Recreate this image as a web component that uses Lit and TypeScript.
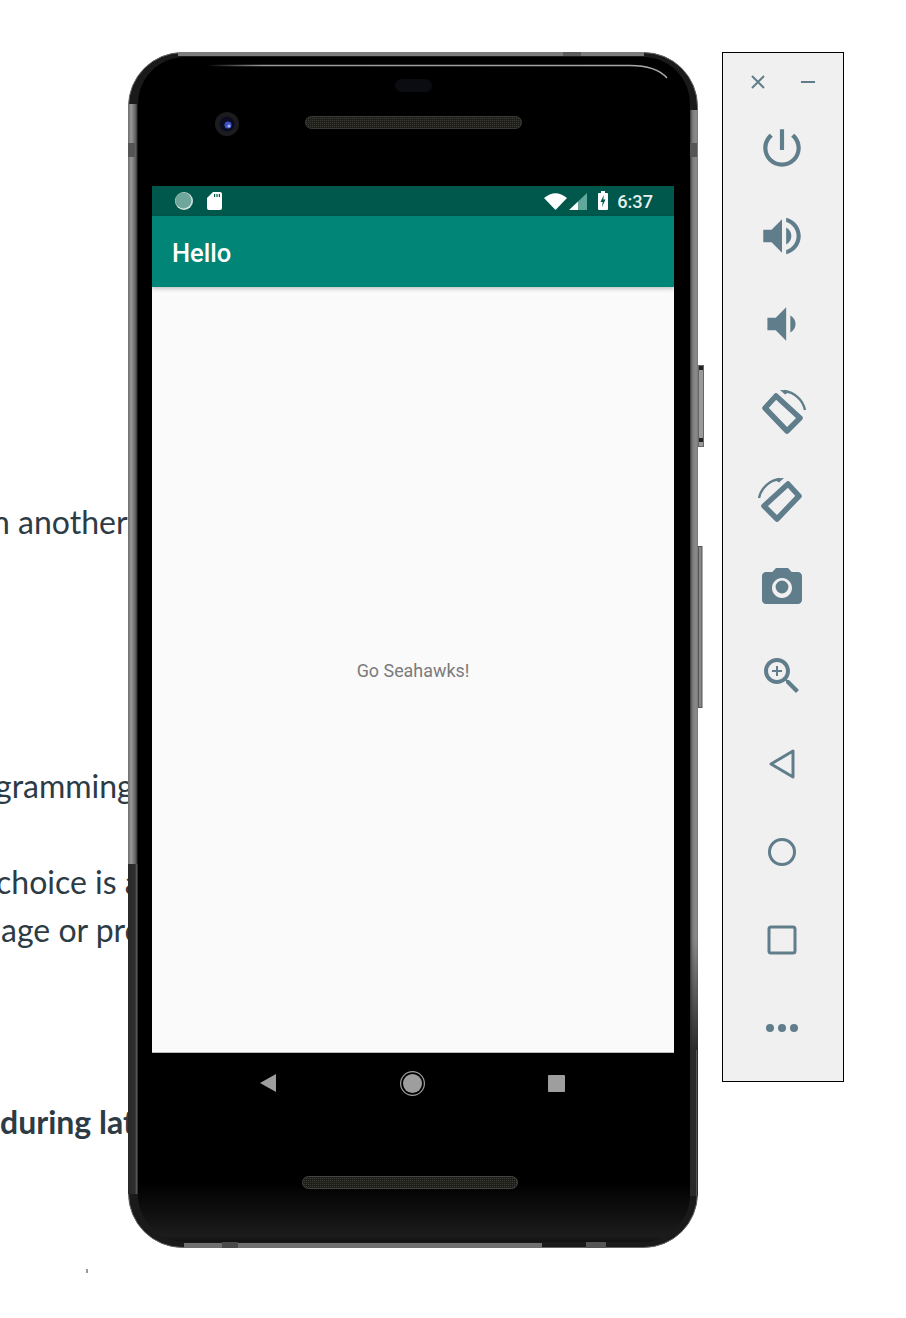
import { LitElement, css, html, svg } from 'lit';
import { customElement } from 'lit/decorators.js';

const docLines = [
  { text: 'n another', cls: 'first' },
  { text: 'gramming', cls: 'second' },
  { text: 'choice is a', cls: 'third' },
  { text: 'age or pro', cls: 'fourth' },
  { text: 'during lat', cls: 'fifth' },
];

// emulator side bar, top to bottom
const rotateArrow = svg`
  <polygon points="31,9 42,21 20,44 7,31" fill="none" stroke="currentColor" stroke-width="5.5" stroke-linejoin="round" />
  <path d="M2 23 A24 24 0 0 1 23 4" fill="none" stroke="currentColor" stroke-width="2.4" />
  <path d="M17 4.5 Q22 2.5 27 3 L22 7.5 Z" fill="currentColor" />`;

const tools = [
  { size: 50, box: '0 0 24 24', body: svg`<path d="M13 3h-2v10h2V3zm4.83 2.17l-1.42 1.42C17.99 7.86 19 9.81 19 12c0 3.87-3.13 7-7 7s-7-3.13-7-7c0-2.19 1.01-4.14 2.58-5.42L6.17 5.17C4.23 6.82 3 9.26 3 12c0 4.97 4.03 9 9 9s9-4.03 9-9c0-2.74-1.23-5.18-3.17-6.83z" />` },
  { size: 50, box: '0 0 24 24', body: svg`<path d="M3 9v6h4l5 5V4L7 9H3zm13.5 3c0-1.77-1.02-3.29-2.5-4.03v8.05c1.48-.73 2.5-2.25 2.5-4.02zM14 3.23v2.06c2.89.86 5 3.54 5 6.71s-2.11 5.85-5 6.71v2.06c4.01-.91 7-4.49 7-8.77s-2.99-7.86-7-8.77z" />` },
  { size: 50, box: '0 0 24 24', body: svg`<path d="M18.5 12c0-1.77-1.02-3.29-2.5-4.03v8.05c1.48-.73 2.5-2.25 2.5-4.02zM5 9v6h4l5 5V4L9 9H5z" />` },
  { size: 50, box: '0 0 50 50', body: svg`<g transform="translate(50,0) scale(-1,1)">${rotateArrow}</g>` },
  { size: 50, box: '0 0 50 50', body: rotateArrow },
  { size: 48, box: '0 0 24 24', body: svg`<circle cx="12" cy="11.5" r="3.2" /><path d="M9 2L7.17 4H4c-1.1 0-2 .9-2 2v12c0 1.1.9 2 2 2h16c1.1 0 2-.9 2-2V6c0-1.1-.9-2-2-2h-3.17L15 2H9zm3 15c-2.76 0-5-2.24-5-5s2.24-5 5-5 5 2.24 5 5-2.24 5-5 5z" />` },
  { size: 48, box: '0 0 24 24', body: svg`<path d="M15.5 14h-.79l-.28-.27C15.41 12.59 16 11.11 16 9.5 16 5.91 13.09 3 9.5 3S3 5.91 3 9.5 5.91 16 9.5 16c1.61 0 3.09-.59 4.23-1.57l.27.28v.79l5 4.99L20.49 19l-4.99-5zm-6 0C7.01 14 5 11.99 5 9.5S7.01 5 9.5 5 14 7.01 14 9.5 11.99 14 9.5 14z" /><path d="M12 10h-2v2H9v-2H7V9h2V7h1v2h2v1z" />` },
  { size: 48, box: '0 0 48 48', body: svg`<polygon points="13,24 35,11 35,37" fill="none" stroke="currentColor" stroke-width="3" stroke-linejoin="round" />` },
  { size: 48, box: '0 0 48 48', body: svg`<circle cx="24" cy="24" r="12.5" fill="none" stroke="currentColor" stroke-width="3" />` },
  { size: 48, box: '0 0 48 48', body: svg`<rect x="11" y="11" width="26" height="26" rx="2" fill="none" stroke="currentColor" stroke-width="3" />` },
  { size: 48, box: '0 0 48 48', body: svg`<circle cx="12" cy="24" r="4" /><circle cx="24" cy="24" r="4" /><circle cx="36" cy="24" r="4" />` },
];

@customElement('app-root')
export class AppRoot extends LitElement {
  static styles = css`
    :host {
      display: block;
    }

    .page {
      display: flex;
      align-items: flex-start;
      width: 906px;
      height: 1318px;
      overflow: hidden;
      background: #fff;
    }

    /* Page text that sits behind the emulator */
    .docs {
      flex: none;
      width: 128px;
      height: 1318px;
      padding-top: 498px;
      box-sizing: border-box;
      overflow: hidden;
      font-family: Lato, sans-serif;
      font-size: 32px;
      line-height: 48px;
      color: #2d3b45;
      white-space: nowrap;
    }

    .first { margin-left: -8px; }
    .second { margin-left: -5px; margin-top: 216px; }
    .third { margin-left: -4px; margin-top: 48px; }
    .fourth { margin-left: 1px; }
    .fifth { margin-left: 0; margin-top: 144px; font-weight: 700; }

    .tick {
      width: 2px;
      height: 4px;
      margin: 123px 0 0 86px;
      background: #999;
    }

    /* Device */
    .phone {
      position: relative;
      flex: none;
      box-sizing: border-box;
      width: 576px;
      height: 1196px;
      margin-top: 52px;
      padding: 134px 30px 0 24px;
    }

    .bezel {
      position: absolute;
      inset: 0;
      width: 576px;
      height: 1196px;
    }

    .screen {
      position: relative;
      display: flex;
      flex-direction: column;
      height: 867px;
      background: #fafafa;
      font-family: Roboto, sans-serif;
    }

    .status {
      display: flex;
      align-items: center;
      flex: none;
      height: 30px;
      padding: 0 21px 0 23px;
      background: #00574b;
      color: #fff;
    }

    .status svg {
      display: block;
      fill: #fff;
    }

    .status-left {
      display: flex;
      align-items: center;
      gap: 14px;
      margin-top: -1px;
    }

    .status-right {
      display: flex;
      align-items: center;
      margin-left: auto;
      margin-top: 1px;
    }

    .wifi { margin-right: 2px; }
    .signal { margin-right: 11px; }
    .battery { margin-right: 9px; margin-top: -2px; }

    .time {
      font-size: 18.2px;
      font-weight: 500;
      line-height: 22px;
      color: #e6f0ee;
    }

    .toolbar {
      position: relative;
      display: flex;
      align-items: center;
      flex: none;
      box-sizing: border-box;
      height: 71px;
      padding: 2px 0 0 20px;
      background: #008577;
      box-shadow: 0 2px 4px rgba(0, 0, 0, 0.22);
      font-size: 25.5px;
      font-weight: 500;
      color: #fff;
    }

    .content {
      display: flex;
      flex: 1;
      align-items: center;
      justify-content: center;
      padding-top: 1px;
      border-bottom: 1px solid #bbb;
      font-size: 17.9px;
      color: #7b7b7b;
    }

    .nav {
      position: relative;
      display: flex;
      height: 60px;
      padding-left: 44px;
    }

    .nav-cell {
      display: flex;
      align-items: center;
      justify-content: center;
      width: 144px;
    }

    .nav svg {
      display: block;
      fill: #9e9e9e;
    }

    /* Emulator tool bar */
    .tools {
      flex: none;
      box-sizing: border-box;
      width: 122px;
      height: 1030px;
      margin: 52px 0 0 18px;
      padding-bottom: 9px;
      border: 1px solid #000;
      background: #f0f0f0;
      color: #607d8b;
    }

    .window-row {
      display: flex;
      justify-content: center;
      height: 58px;
    }

    .window-btn {
      display: flex;
      align-items: center;
      justify-content: center;
      width: 50px;
      height: 58px;
    }

    .tool {
      display: flex;
      align-items: center;
      justify-content: center;
      height: 88px;
    }

    .tool svg {
      display: block;
      fill: currentColor;
    }

    .tool-list {
      margin-top: -7px;
      padding-right: 2px;
    }
  `;

  renderBezel() {
    return html`
      <svg class="bezel" viewBox="128 52 576 1196">
        <defs>
          <linearGradient id="rail" x1="0" x2="1" y1="0" y2="0">
            <stop offset="0" stop-color="#6c6c6c" />
            <stop offset="0.35" stop-color="#999" />
            <stop offset="0.8" stop-color="#666" />
            <stop offset="1" stop-color="#3a3a3a" />
          </linearGradient>
          <linearGradient id="railRight" x1="0" x2="1" y1="0" y2="0">
            <stop offset="0" stop-color="#3a3a3a" />
            <stop offset="0.3" stop-color="#777" />
            <stop offset="0.75" stop-color="#8c8c8c" />
            <stop offset="1" stop-color="#777" />
          </linearGradient>
          <linearGradient id="railLow" x1="0" x2="1" y1="0" y2="0">
            <stop offset="0" stop-color="#2a2a2a" />
            <stop offset="0.7" stop-color="#2e2e2e" />
            <stop offset="0.85" stop-color="#555" />
            <stop offset="1" stop-color="#222" />
          </linearGradient>
          <linearGradient id="railFade" x1="0" x2="0" y1="0" y2="1">
            <stop offset="0" stop-color="#2a2a2a" stop-opacity="0" />
            <stop offset="1" stop-color="#2a2a2a" />
          </linearGradient>
          <linearGradient id="body" x1="0" x2="0" y1="0" y2="1">
            <stop offset="0" stop-color="#000" />
            <stop offset="0.95" stop-color="#000" />
            <stop offset="0.995" stop-color="#1c1c1c" />
            <stop offset="1" stop-color="#111" />
          </linearGradient>
          <linearGradient id="glint" x1="0" x2="1" y1="0" y2="0">
            <stop offset="0" stop-color="#aaa" stop-opacity="0" />
            <stop offset="0.12" stop-color="#999" />
            <stop offset="1" stop-color="#aaa" />
          </linearGradient>
          <pattern id="mesh" width="2" height="2" patternUnits="userSpaceOnUse">
            <rect width="2" height="2" fill="#1e1e1b" />
            <rect width="1" height="1" fill="#3c3c35" />
          </pattern>
        </defs>

        <!-- side keys -->
        <rect x="698.5" y="365.5" width="5" height="81" fill="#9a9a9a" stroke="#666" />
        <rect x="698.5" y="546.5" width="3.5" height="161" fill="#888" stroke="#555" />
        <rect x="699" y="366" width="4" height="4" fill="#222" />
        <rect x="699" y="438" width="4" height="4" fill="#222" />

        <!-- shell -->
        <rect x="128.5" y="52.500" width="569" height="1195" rx="54" fill="#1a1a1a" stroke="#666" />
        <rect x="128" y="104" width="9" height="760" fill="url(#rail)" />
        <rect x="128" y="864" width="10" height="330" fill="url(#railLow)" />
        <rect x="128" y="143" width="7" height="14" fill="#555" />
        <rect x="690" y="110" width="8" height="1086" fill="url(#railRight)" />
        <rect x="690" y="940" width="8" height="110" fill="url(#railFade)" />
        <rect x="690" y="1050" width="8" height="146" fill="#2a2a2a" />
        <rect x="696" y="1050" width="1" height="146" fill="#555" />
        <rect x="690" y="143" width="7" height="14" fill="#555" />
        <rect x="178" y="52" width="466" height="4" fill="#7d7d7d" />
        <rect x="563" y="52" width="18" height="4" fill="#5c5c5c" />
        <rect x="184" y="1243" width="358" height="5" fill="#707070" />
        <rect x="222" y="1241" width="16" height="7" fill="#4a4a4a" />
        <rect x="586" y="1241" width="20" height="7" fill="#555" />

        <!-- front glass -->
        <rect x="138" y="57" width="552" height="1185" rx="47" fill="url(#body)" />
        <path d="M207 65.5 H630 Q656 65.5 667 78" fill="none" stroke="url(#glint)" stroke-width="1.5" />

        <!-- sensors and speakers -->
        <rect x="395" y="79" width="37" height="13" rx="6.5" fill="#0a0c12" />
        <circle cx="227" cy="124" r="12" fill="#1c1c1e" />
        <circle cx="227" cy="124" r="7.5" fill="#0b0c22" />
        <circle cx="228" cy="125" r="3.5" fill="#3c52c4" />
        <circle cx="229" cy="126" r="1.5" fill="#a8b4ee" />
        <rect x="305.5" y="116.5" width="216" height="12" rx="6" fill="url(#mesh)" stroke="#3a3a3a" />
        <rect x="302.5" y="1176.5" width="215" height="12" rx="6" fill="url(#mesh)" stroke="#444" />
      </svg>
    `;
  }

  renderStatus() {
    return html`
      <div class="status">
        <div class="status-left">
          <svg width="18" height="18" viewBox="0 0 18 18">
            <circle cx="9" cy="9" r="9" fill="#cfe0dc" />
            <circle cx="8.4" cy="8.4" r="8" fill="#6fa69c" />
          </svg>
          <svg width="15" height="18" viewBox="0 0 15 18">
            <path d="M6 0H13A2 2 0 0 1 15 2V16A2 2 0 0 1 13 18H2A2 2 0 0 1 0 16V6Z" />
            <path d="M7 2h1.2v3H7zM9.4 2h1.2v3H9.4zM11.8 2H13v3h-1.2z" fill="#00574b" />
          </svg>
        </div>
        <div class="status-right">
          <svg class="wifi" width="23" height="17" viewBox="0 0 23 17">
            <path d="M0 5 Q11.5 -4.5 23 5 L11.5 17 Z" />
          </svg>
          <svg class="signal" width="18" height="17" viewBox="0 0 18 17">
            <path d="M18 0V17H9V8.5Z" fill="#62a79c" />
            <path d="M9 8.5V17H0Z" />
          </svg>
          <svg class="battery" width="10" height="19" viewBox="0 0 10 19">
            <path d="M3 0H7V2H9A1 1 0 0 1 10 3V18A1 1 0 0 1 9 19H1A1 1 0 0 1 0 18V3A1 1 0 0 1 1 2H3Z" />
            <path d="M5.8 4 L2.5 11 H4.7 L4 16 L7.5 8.5 H5.3 Z" fill="#00574b" />
          </svg>
          <span class="time">6:37</span>
        </div>
      </div>
    `;
  }

  renderNav() {
    return html`
      <div class="nav">
        <div class="nav-cell">
          <svg width="16" height="18" viewBox="0 0 16 18"><path d="M0 9 L16 0 V18 Z" /></svg>
        </div>
        <div class="nav-cell">
          <svg width="25" height="25" viewBox="0 0 25 25">
            <circle cx="12.5" cy="12.5" r="11.9" fill="none" stroke="#9e9e9e" stroke-width="1.2" />
            <circle cx="12.5" cy="12.5" r="9.5" />
          </svg>
        </div>
        <div class="nav-cell">
          <svg width="17" height="17" viewBox="0 0 17 17"><rect width="17" height="17" rx="1" /></svg>
        </div>
      </div>
    `;
  }

  render() {
    return html`
      <div class="page">
        <div class="docs">
          ${docLines.map(line => html`<div class=${line.cls}>${line.text}</div>`)}
          <div class="tick"></div>
        </div>

        <div class="phone">
          ${this.renderBezel()}
          <div class="screen">
            ${this.renderStatus()}
            <div class="toolbar">Hello</div>
            <div class="content">Go Seahawks!</div>
          </div>
          ${this.renderNav()}
        </div>

        <div class="tools">
          <div class="window-row">
            <div class="window-btn">
              <svg width="16" height="16" viewBox="0 0 16 16">
                <path d="M2 2L14 14M14 2L2 14" stroke="currentColor" stroke-width="2" />
              </svg>
            </div>
            <div class="window-btn">
              <svg width="16" height="16" viewBox="0 0 16 16">
                <path d="M1 8H15" stroke="currentColor" stroke-width="2" />
              </svg>
            </div>
          </div>
          <div class="tool-list">
            ${tools.map(
              tool => html`
                <div class="tool">
                  <svg width=${tool.size} height=${tool.size} viewBox=${tool.box}>${tool.body}</svg>
                </div>
              `,
            )}
          </div>
        </div>
      </div>
    `;
  }
}
